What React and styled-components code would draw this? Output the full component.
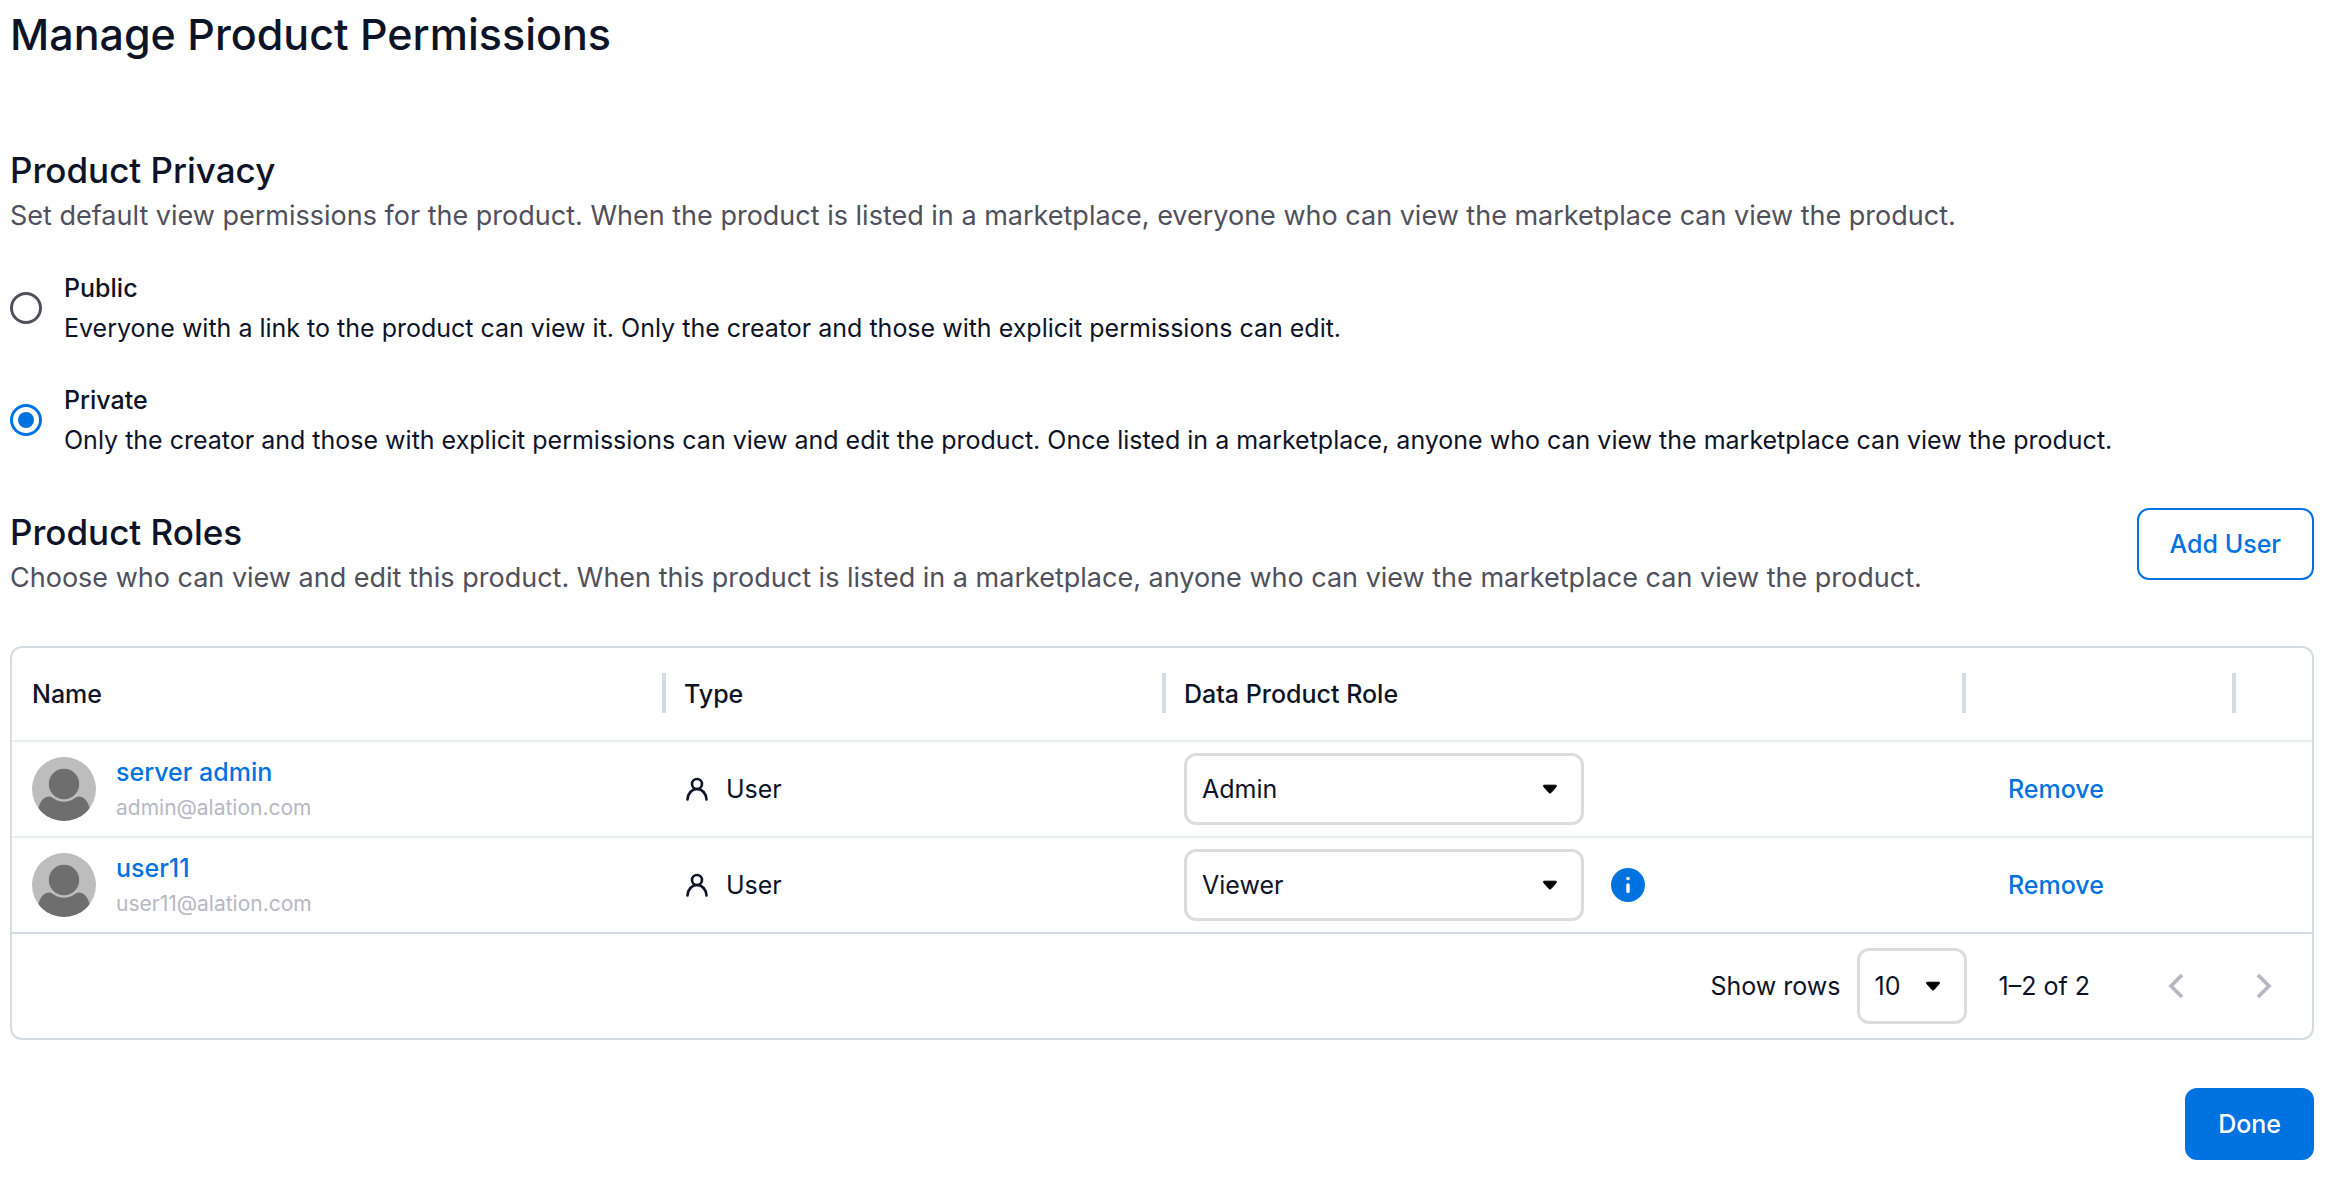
import React, { useState } from "react";
import styled, { createGlobalStyle } from "styled-components";

const GlobalStyle = createGlobalStyle`
  *, *::before, *::after { box-sizing: border-box; }
  body {
    margin: 0;
    background: #fff;
    color: #0e1427;
    font-family: Inter, "Liberation Sans", sans-serif;
    font-size: 25px;
    line-height: 40px;
  }
  h1, h2, p { margin: 0; }
  button, select, input { font: inherit; color: inherit; }
`;

const Page = styled.main`
  display: flex;
  flex-direction: column;
  padding: 0 18px 18px 10px;
`;

const Title = styled.h1`
  font-size: 43px;
  font-weight: 550;
  line-height: 68px;
`;

const Section = styled.section`
  margin-top: ${(p) => p.$gap}px;
`;

const SectionTitle = styled.h2`
  font-size: 35px;
  font-weight: 550;
  line-height: 44px;
`;

const SectionText = styled.p`
  font-size: 27px;
  line-height: 48px;
  color: #50505c;
`;

const Options = styled.div`
  display: flex;
  flex-direction: column;
  gap: 32px;
  margin-top: 28px;
`;

const Option = styled.label`
  display: flex;
  align-items: center;
  gap: 22px;
  cursor: pointer;
`;

const Radio = styled.input`
  appearance: none;
  flex: none;
  display: grid;
  place-items: center;
  width: 32px;
  height: 32px;
  margin: 0;
  border: 3px solid #50505c;
  border-radius: 50%;

  &:checked { border-color: #0073e0; }
  &:checked::before {
    content: "";
    width: 16px;
    height: 16px;
    border-radius: 50%;
    background: #0073e0;
  }
`;

const OptionBody = styled.span`
  display: flex;
  flex-direction: column;
`;

const OptionName = styled.span`
  font-weight: 550;
`;

const RolesHead = styled.div`
  display: flex;
  justify-content: space-between;
  align-items: flex-start;
  gap: 24px;
`;

const RolesIntro = styled.div`
  padding-top: 2px;
`;

const Button = styled.button`
  flex: none;
  height: 72px;
  padding: 0 31px;
  border: 2px solid #0073e0;
  border-radius: 12px;
  font-weight: 550;
  color: ${(p) => (p.$filled ? "#fff" : "#0073e0")};
  background: ${(p) => (p.$filled ? "#0073e0" : "#fff")};
  cursor: pointer;
`;

const Card = styled.div`
  margin-top: 44px;
  border: 2px solid #d3dde1;
  border-radius: 12px;
`;

const Table = styled.table`
  width: 100%;
  table-layout: fixed;
  border-collapse: separate;
  border-spacing: 0;
`;

const Col = styled.col`
  width: ${(p) => p.$width};
`;

const HeadCell = styled.th`
  position: relative;
  height: 94px;
  padding: 0 20px;
  border-bottom: 2px solid #e7edf0;
  text-align: left;
  font-weight: 550;

  &:not(:last-child)::after {
    content: "";
    position: absolute;
    top: 25px;
    right: -2px;
    width: 4px;
    height: 40px;
    background: #d3dde1;
  }
`;

const Cell = styled.td`
  height: 96px;
  padding: 0 20px;
  border-bottom: 2px solid #e7edf0;

  tr:last-child > & { border-bottom-color: #d3dde1; }
`;

const CellContent = styled.div`
  display: flex;
  align-items: center;
  gap: ${(p) => p.$gap}px;
`;

const Person = styled.div`
  display: flex;
  flex-direction: column;
  padding-top: 2px;
`;

const PersonLink = styled.a`
  font-weight: 550;
  line-height: 36px;
  color: #0073e0;
  text-decoration: none;
`;

const Email = styled.span`
  font-size: 21px;
  line-height: 36px;
  color: #b8b8c4;
`;

const SelectBox = styled.div`
  display: grid;
  align-items: center;
  flex: none;
  width: ${(p) => p.$width}px;

  & > * { grid-area: 1 / 1; }
  & > svg {
    justify-self: end;
    margin-right: 26px;
    pointer-events: none;
  }
`;

const Select = styled.select`
  appearance: none;
  width: 100%;
  height: ${(p) => p.$height}px;
  padding: 0 15px;
  border: 3px solid #dcdcdc;
  border-radius: 12px;
  background: #fff;
`;

const InfoButton = styled.button`
  display: flex;
  padding: 0;
  border: 0;
  background: none;
  cursor: pointer;
`;

const RemoveButton = styled.button`
  padding: 0 24px;
  border: 0;
  background: none;
  font-weight: 550;
  color: #0073e0;
  cursor: pointer;
`;

const Pager = styled.div`
  display: flex;
  align-items: center;
  justify-content: flex-end;
  height: 104px;
  padding-right: 4px;
`;

const PagerLabel = styled.label`
  margin-right: 16px;
`;

const Range = styled.span`
  margin: 0 42px 0 32px;
`;

const PageButton = styled.button`
  display: grid;
  place-items: center;
  width: 88px;
  height: 88px;
  padding: 0;
  border: 0;
  background: none;
`;

const Footer = styled.footer`
  display: flex;
  justify-content: flex-end;
  margin-top: 48px;
`;

const Caret = () => (
  <svg width="16" height="10" viewBox="0 0 16 10" aria-hidden="true">
    <path d="M2.2 1.2h11.6c.8 0 1.1.8.6 1.4L9.2 8.4c-.7.8-1.7.8-2.4 0L1.6 2.6C1.1 2 1.4 1.2 2.2 1.2Z" fill="#000" stroke="#000" strokeWidth="1" />
  </svg>
);

const Avatar = () => (
  <svg width="64" height="64" viewBox="0 0 64 64" aria-hidden="true">
    <clipPath id="avatar-disc"><circle cx="32" cy="32" r="32" /></clipPath>
    <g clipPath="url(#avatar-disc)">
      <rect width="64" height="64" fill="#bdbdbd" />
      <circle cx="32" cy="27" r="15.2" fill="#6e6e6e" />
      <path d="M6 53c1.5-8 5.500-13.500 11-13.500 2.200 0 3.400 1.200 5 2.300 6 4 14 4 20 0 1.600-1.100 2.800-2.300 5-2.300 5.500 0 9.500 5.500 11 13.500V64H6Z" fill="#6e6e6e" />
    </g>
  </svg>
);

const PersonIcon = () => (
  <svg width="26" height="26" viewBox="0 0 26 26" fill="none" stroke="#0e1427" strokeWidth="2.6" strokeLinecap="round" aria-hidden="true">
    <circle cx="13" cy="8" r="5" />
    <path d="M3.500 23.500C3.700 17.500 7.900 13 13 13s9.300 4.500 9.500 10.500" />
  </svg>
);

const InfoIcon = () => (
  <svg width="34" height="34" viewBox="0 0 34 34" aria-hidden="true">
    <circle cx="17" cy="17" r="17" fill="#0073e0" />
    <circle cx="17" cy="10.5" r="1.8" fill="#fff" />
    <path d="M17 17v6.500" stroke="#fff" strokeWidth="3.4" strokeLinecap="round" />
  </svg>
);

const Chevron = ({ d }) => (
  <svg width="24" height="28" viewBox="0 0 24 28" fill="none" stroke="#b8b8c4" strokeWidth="3.8" aria-hidden="true">
    <path d={d} />
  </svg>
);

const options = [
  {
    id: "public",
    name: "Public",
    text: "Everyone with a link to the product can view it. Only the creator and those with explicit permissions can edit.",
  },
  {
    id: "private",
    name: "Private",
    text: "Only the creator and those with explicit permissions can view and edit the product. Once listed in a marketplace, anyone who can view the marketplace can view the product.",
  },
];

const users = [
  { name: "server admin", email: "admin@alation.com", role: "Admin" },
  { name: "user11", email: "user11@alation.com", role: "Viewer", info: true },
];

export default function App() {
  const [privacy, setPrivacy] = useState("private");

  return (
    <>
      <GlobalStyle />
      <Page>
        <Title>Manage Product Permissions</Title>

        <Section $gap={80}>
          <SectionTitle>Product Privacy</SectionTitle>
          <SectionText>
            Set default view permissions for the product. When the product is listed in a marketplace, everyone who can view the marketplace can view the product.
          </SectionText>
          <Options>
            {options.map((o) => (
              <Option key={o.id}>
                <Radio
                  type="radio"
                  name="privacy"
                  value={o.id}
                  checked={privacy === o.id}
                  onChange={() => setPrivacy(o.id)}
                />
                <OptionBody>
                  <OptionName>{o.name}</OptionName>
                  <span>{o.text}</span>
                </OptionBody>
              </Option>
            ))}
          </Options>
        </Section>

        <Section $gap={48}>
          <RolesHead>
            <RolesIntro>
              <SectionTitle>Product Roles</SectionTitle>
              <SectionText>
                Choose who can view and edit this product. When this product is listed in a marketplace, anyone who can view the marketplace can view the product.
              </SectionText>
            </RolesIntro>
            <Button type="button">Add User</Button>
          </RolesHead>

          <Card>
            <Table>
              <colgroup>
                <Col $width="652px" />
                <Col $width="500px" />
                <Col $width="auto" />
                <Col $width="270px" />
                <Col $width="78px" />
              </colgroup>
              <thead>
                <tr>
                  <HeadCell scope="col">Name</HeadCell>
                  <HeadCell scope="col">Type</HeadCell>
                  <HeadCell scope="col">Data Product Role</HeadCell>
                  <HeadCell aria-label="Actions" />
                  <HeadCell aria-hidden="true" />
                </tr>
              </thead>
              <tbody>
                {users.map((u) => (
                  <tr key={u.name}>
                    <Cell>
                      <CellContent $gap={20}>
                        <Avatar />
                        <Person>
                          <PersonLink href="#">{u.name}</PersonLink>
                          <Email>{u.email}</Email>
                        </Person>
                      </CellContent>
                    </Cell>
                    <Cell>
                      <CellContent $gap={16}>
                        <PersonIcon />
                        <span>User</span>
                      </CellContent>
                    </Cell>
                    <Cell>
                      <CellContent $gap={27}>
                        <SelectBox $width={400}>
                          <Select $height={72} defaultValue={u.role} aria-label={`Role of ${u.name}`}>
                            <option>Admin</option>
                            <option>Viewer</option>
                          </Select>
                          <Caret />
                        </SelectBox>
                        {u.info && (
                          <InfoButton type="button" aria-label="Role details">
                            <InfoIcon />
                          </InfoButton>
                        )}
                      </CellContent>
                    </Cell>
                    <Cell>
                      <RemoveButton type="button">Remove</RemoveButton>
                    </Cell>
                    <Cell />
                  </tr>
                ))}
              </tbody>
            </Table>
            <Pager>
              <PagerLabel htmlFor="page-size">Show rows</PagerLabel>
              <SelectBox $width={110}>
                <Select id="page-size" $height={76} defaultValue="10">
                  <option>10</option>
                  <option>25</option>
                  <option>50</option>
                </Select>
                <Caret />
              </SelectBox>
              <Range>1–2 of 2</Range>
              <PageButton type="button" aria-label="Previous page" disabled>
                <Chevron d="M18 3 7 14l11 11" />
              </PageButton>
              <PageButton type="button" aria-label="Next page" disabled>
                <Chevron d="M6 3l11 11L6 25" />
              </PageButton>
            </Pager>
          </Card>
        </Section>

        <Footer>
          <Button type="button" $filled>Done</Button>
        </Footer>
      </Page>
    </>
  );
}
